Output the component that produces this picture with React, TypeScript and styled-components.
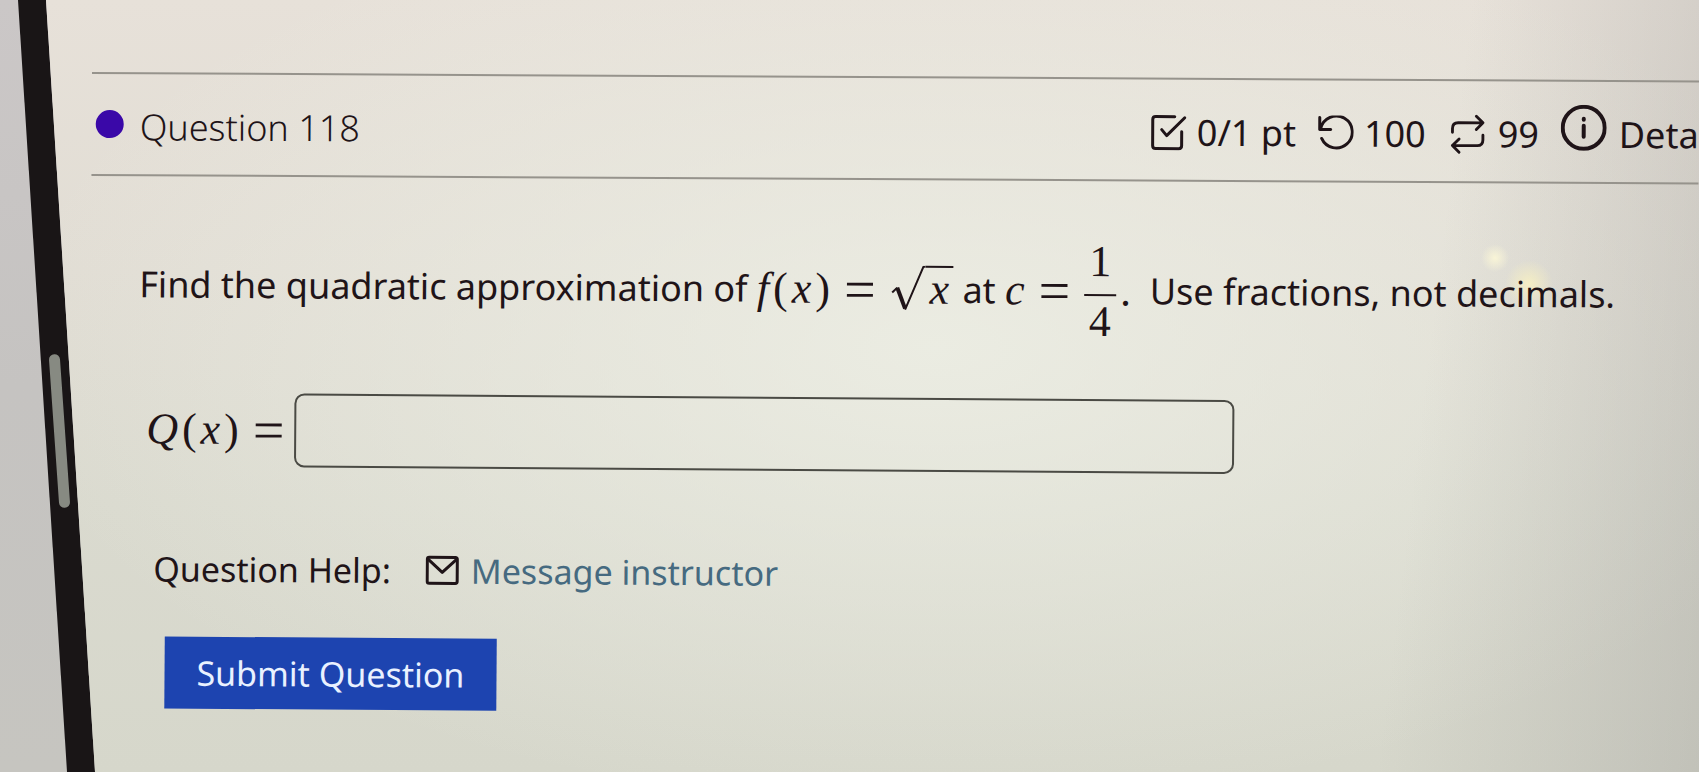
import React from "react";
import styled, { createGlobalStyle } from "styled-components";

const GlobalStyle = createGlobalStyle`
  * { box-sizing: border-box; }
  html, body { margin: 0; }
  body { background: #dfdfd4; color: #1f1418; font-family: "Noto Sans", "Open Sans", sans-serif; }
`;

const Screen = styled.div`
  display: grid;
  grid-template-columns: 96px minmax(0, 1fr);
  min-height: 100vh;
  overflow: hidden;
  background:
    radial-gradient(circle at 88% 258px, rgba(255, 250, 215, 0.8), transparent 14px),
    radial-gradient(circle at 90% 284px, rgba(255, 246, 190, 0.7), transparent 24px),
    linear-gradient(97deg, transparent 82%, rgba(150, 148, 146, 0.32) 100%),
    radial-gradient(ellipse 55% 60% at 55% 45%, rgba(238, 240, 230, 0.8), transparent),
    linear-gradient(180deg, #e7e1d9 0%, #e1ddd4 35%, #dadacf 65%, #d6d7cb 100%);
`;

const Divider = styled.div`
  position: relative;
  background: linear-gradient(180deg, #cbc7c7 0%, #c5c3c1 50%, #c6c5c0 100%);
  clip-path: polygon(0 0, 46px 0, 95px 100%, 0 100%);

  &::before {
    content: "";
    position: absolute;
    inset: 0;
    background: #191516;
    clip-path: polygon(18px 0, 46px 0, 95px 100%, 67px 100%);
  }
`;

const Handle = styled.div`
  position: absolute;
  left: 54px;
  top: 354px;
  width: 11px;
  height: 154px;
  border-radius: 6px;
  background: #878a82;
  transform: rotate(-4deg);
`;

const Page = styled.main`
  min-width: 0;
  padding-top: 72px;
`;

const Header = styled.header`
  display: flex;
  align-items: center;
  height: 104px;
  margin-left: -4px;
  padding-left: 4px;
  border-top: 2px solid #96938c;
  border-bottom: 2px solid #96938c;
  transform: rotate(0.3deg);
  transform-origin: left top;
`;

const Dot = styled.span`
  width: 28px;
  height: 28px;
  margin-right: 16px;
  border-radius: 50%;
  background: #3a08a8;
`;

const Title = styled.h1`
  margin: 0;
  padding-top: 6px;
  font-size: 36px;
  font-weight: 300;
  line-height: 48px;
`;

const Stats = styled.div`
  display: flex;
  align-items: center;
  gap: 22px;
  margin-left: auto;
  padding-top: 6px;
  white-space: nowrap;
`;

const Stat = styled.span`
  display: flex;
  align-items: center;
  gap: 10px;
  font-size: 36px;
  line-height: 48px;
`;

const DetailsLink = styled.a`
  display: flex;
  align-items: center;
  gap: 12px;
  color: inherit;
  font-size: 36px;
  line-height: 48px;
  text-decoration: none;

  svg { margin-bottom: 14px; }
`;

const Icon = styled.svg<{ $size: number }>`
  flex: none;
  width: ${(p) => p.$size}px;
  height: ${(p) => p.$size}px;
  fill: none;
  stroke: currentColor;
  stroke-linecap: round;
  stroke-linejoin: round;
`;

const Body = styled.form`
  display: flex;
  flex-direction: column;
  align-items: flex-start;
  transform: rotate(0.4deg);
  transform-origin: left top;
  font-size: 34px;
  line-height: 48px;
`;

const Prompt = styled.p`
  display: flex;
  align-items: center;
  height: 112px;
  margin: 52px 0 0 44px;
  font-size: 36px;
  white-space: pre;
`;

const MathText = styled.span`
  display: inline-flex;
  align-items: center;
  gap: 4px;
  font-family: "Liberation Serif", serif;
  font-size: 44px;
`;

const Equals = styled.span`
  padding: 0 10px;
  font-size: 56px;
`;

const Root = styled.span`
  display: inline-flex;
`;

const RadicalSign = styled.svg`
  width: 36px;
  height: 48px;
  fill: none;
  stroke: currentColor;
  stroke-linejoin: round;
`;

const Radicand = styled.span`
  padding: 0 4px 2px;
  border-top: 2px solid currentColor;
  line-height: 44px;
`;

const Fraction = styled.span`
  display: inline-flex;
  flex-direction: column;
  align-items: center;
  padding-top: 8px;
  line-height: 52px;
`;

const Numerator = styled.span`
  padding: 0 5px 6px;
  border-bottom: 2px solid currentColor;
`;

const Denominator = styled.span`
  padding-bottom: 6px;
`;

const AnswerRow = styled.div`
  display: flex;
  align-items: center;
  margin: 52px 0 0 52px;
`;

const Answer = styled.input`
  width: 940px;
  height: 74px;
  padding: 0 16px;
  border: 2px solid #4a4a44;
  border-radius: 10px;
  background: transparent;
  color: inherit;
  font: inherit;
`;

const HelpRow = styled.div`
  display: flex;
  align-items: center;
  margin: 78px 0 0 60px;
`;

const MessageLink = styled.a`
  display: flex;
  align-items: center;
  gap: 12px;
  margin-left: 34px;
  color: #466a80;
  text-decoration: none;

  svg { color: #1f1418; }
`;

const Submit = styled.button`
  height: 72px;
  margin: 44px 0 0 72px;
  padding: 0 32px;
  border: 0;
  background: #1d44b0;
  color: #e9f1ff;
  font: inherit;
`;

export default function App() {
  return (
    <>
      <GlobalStyle />
      <Screen>
        <Divider>
          <Handle />
        </Divider>
        <Page>
          <Header>
            <Dot />
            <Title>Question 118</Title>
            <Stats>
              <Stat>
                <Icon $size={36} viewBox="0 0 36 36" strokeWidth="3">
                  <path d="M24 2H5Q2 2 2 5V31Q2 34 5 34H28Q31 34 31 31V17M11 15L16 21L34 3" />
                </Icon>
                0/1 pt
              </Stat>
              <Stat>
                <Icon $size={36} viewBox="0 0 36 36" strokeWidth="3">
                  <path d="M2 2V14H13M3 13A16 16 0 1 1 4 23" />
                </Icon>
                100
              </Stat>
              <Stat>
                <Icon $size={40} viewBox="0 0 38 42" strokeWidth="3">
                  <path d="M3 19V15Q3 9 9 9H35M28 2L35 9L28 16M35 22V27Q35 33 29 33H3M10 26L3 33L10 40" />
                </Icon>
                99
              </Stat>
              <DetailsLink href="#details" aria-label="Details">
                <Icon $size={46} viewBox="0 0 46 46" strokeWidth="4">
                  <circle cx="23" cy="23" r="21" />
                  <path d="M23 21V32M23 14V15" />
                </Icon>
                Deta
              </DetailsLink>
            </Stats>
          </Header>
          <Body onSubmit={(e) => e.preventDefault()}>
            <Prompt>
              {"Find the quadratic approximation of "}
              <MathText>
                <i>f</i>
                <span>(</span>
                <i>x</i>
                <span>)</span>
                <Equals>=</Equals>
                <Root>
                  <RadicalSign viewBox="0 0 36 48">
                    <path d="M3 27L8 22" strokeWidth="2" />
                    <path d="M8 22L16 43" strokeWidth="4" />
                    <path d="M16 44L34 1H36" strokeWidth="2" />
                  </RadicalSign>
                  <Radicand>
                    <i>x</i>
                  </Radicand>
                </Root>
              </MathText>
              {" at "}
              <MathText>
                <i>c</i>
                <Equals>=</Equals>
                <Fraction>
                  <Numerator>1</Numerator>
                  <Denominator>4</Denominator>
                </Fraction>
                <span>.</span>
              </MathText>
              {"  Use fractions, not decimals."}
            </Prompt>
            <AnswerRow>
              <label htmlFor="answer">
                <MathText>
                  <i>Q</i>
                  <span>(</span>
                  <i>x</i>
                  <span>)</span>
                  <Equals>=</Equals>
                </MathText>
              </label>
              <Answer id="answer" type="text" />
            </AnswerRow>
            <HelpRow>
              Question Help:
              <MessageLink href="#message">
                <Icon $size={34} viewBox="0 0 34 34" strokeWidth="3">
                  <rect x="2" y="4" width="30" height="26" rx="2" />
                  <path d="M3 6L17 19L31 6" />
                </Icon>
                Message instructor
              </MessageLink>
            </HelpRow>
            <Submit type="submit">Submit Question</Submit>
          </Body>
        </Page>
      </Screen>
    </>
  );
}
